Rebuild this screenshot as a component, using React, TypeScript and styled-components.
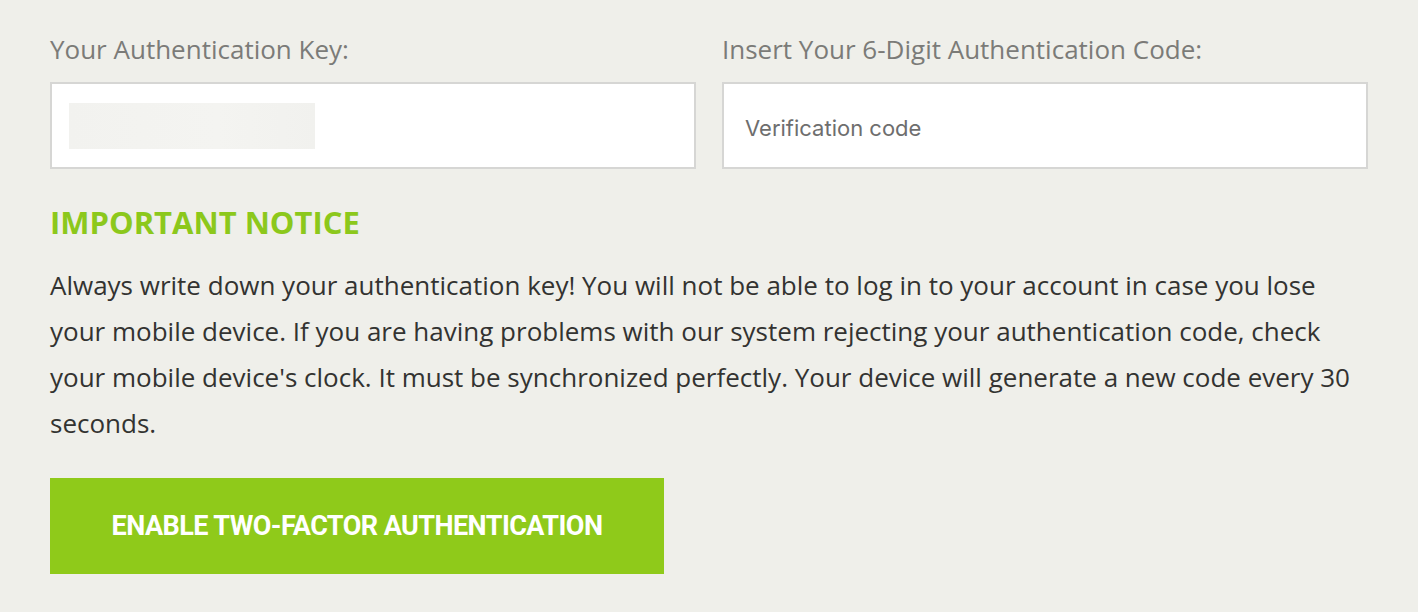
import React from 'react';
import styled, { createGlobalStyle } from 'styled-components';

const GlobalStyle = createGlobalStyle`
  html, body {
    margin: 0;
    padding: 0;
    background: #efefea;
  }
`;

const App: React.FC = () => {
  return (
    <>
      <GlobalStyle />
      <SPage>
        <SFields>
          <SField>
            <SLabel>Your Authentication Key:</SLabel>
            <SBox>
              <SKeyMask />
            </SBox>
          </SField>
          <SField>
            <SLabel>Insert Your 6-Digit Authentication Code:</SLabel>
            <SInput placeholder="Verification code" />
          </SField>
        </SFields>

        <SHeading>IMPORTANT NOTICE</SHeading>
        <SText>
          Always write down your authentication key! You will not be able to log in to your account in case you lose
          your mobile device. If you are having problems with our system rejecting your authentication code, check
          your mobile device's clock. It must be synchronized perfectly. Your device will generate a new code every 30
          seconds.
        </SText>

        <SButton type="button">ENABLE TWO-FACTOR AUTHENTICATION</SButton>
      </SPage>
    </>
  );
};

const SPage = styled.div`
  padding: 33px 50px 38px 50px;
  font-family: 'Open Sans', sans-serif;
`;

const SFields = styled.div`
  display: grid;
  grid-template-columns: 1fr 1fr;
  column-gap: 26px;
`;

const SField = styled.div`
  display: flex;
  flex-direction: column;
`;

const SLabel = styled.label`
  font-size: 26px;
  line-height: 32px;
  color: #7b7b78;
  margin-bottom: 17px;
`;

const SBox = styled.div`
  box-sizing: border-box;
  height: 87px;
  border: 2px solid #d6d6d4;
  background: #fff;
  padding: 19px 17px;
`;

const SKeyMask = styled.div`
  width: 246px;
  height: 46px;
  background: linear-gradient(90deg, #f2f2ef, #f4f4f1 60%, #f1f1ee);
`;

const SInput = styled.input`
  box-sizing: border-box;
  height: 87px;
  border: 2px solid #d6d6d4;
  background: #fff;
  padding: 4px 21px 0 21px;
  font-family: Inter, 'Liberation Sans', sans-serif;
  font-size: 22px;
  color: #333;
  outline: none;

  &::placeholder {
    color: #6e6e6e;
  }
`;

const SHeading = styled.h2`
  margin: 33px 0 0 0;
  font-size: 31px;
  line-height: 40px;
  font-weight: 700;
  color: #8cc81c;
`;

const SText = styled.p`
  margin: 20px 0 0 0;
  font-size: 26px;
  line-height: 46px;
  color: #333331;
`;

const SButton = styled.button`
  display: block;
  margin-top: 32px;
  width: 614px;
  height: 96px;
  border: none;
  background: #8fca1a;
  color: #fff;
  font-family: Roboto, sans-serif;
  font-size: 27px;
  font-weight: 700;
  letter-spacing: -0.55px;
  cursor: pointer;
`;

export default App;
